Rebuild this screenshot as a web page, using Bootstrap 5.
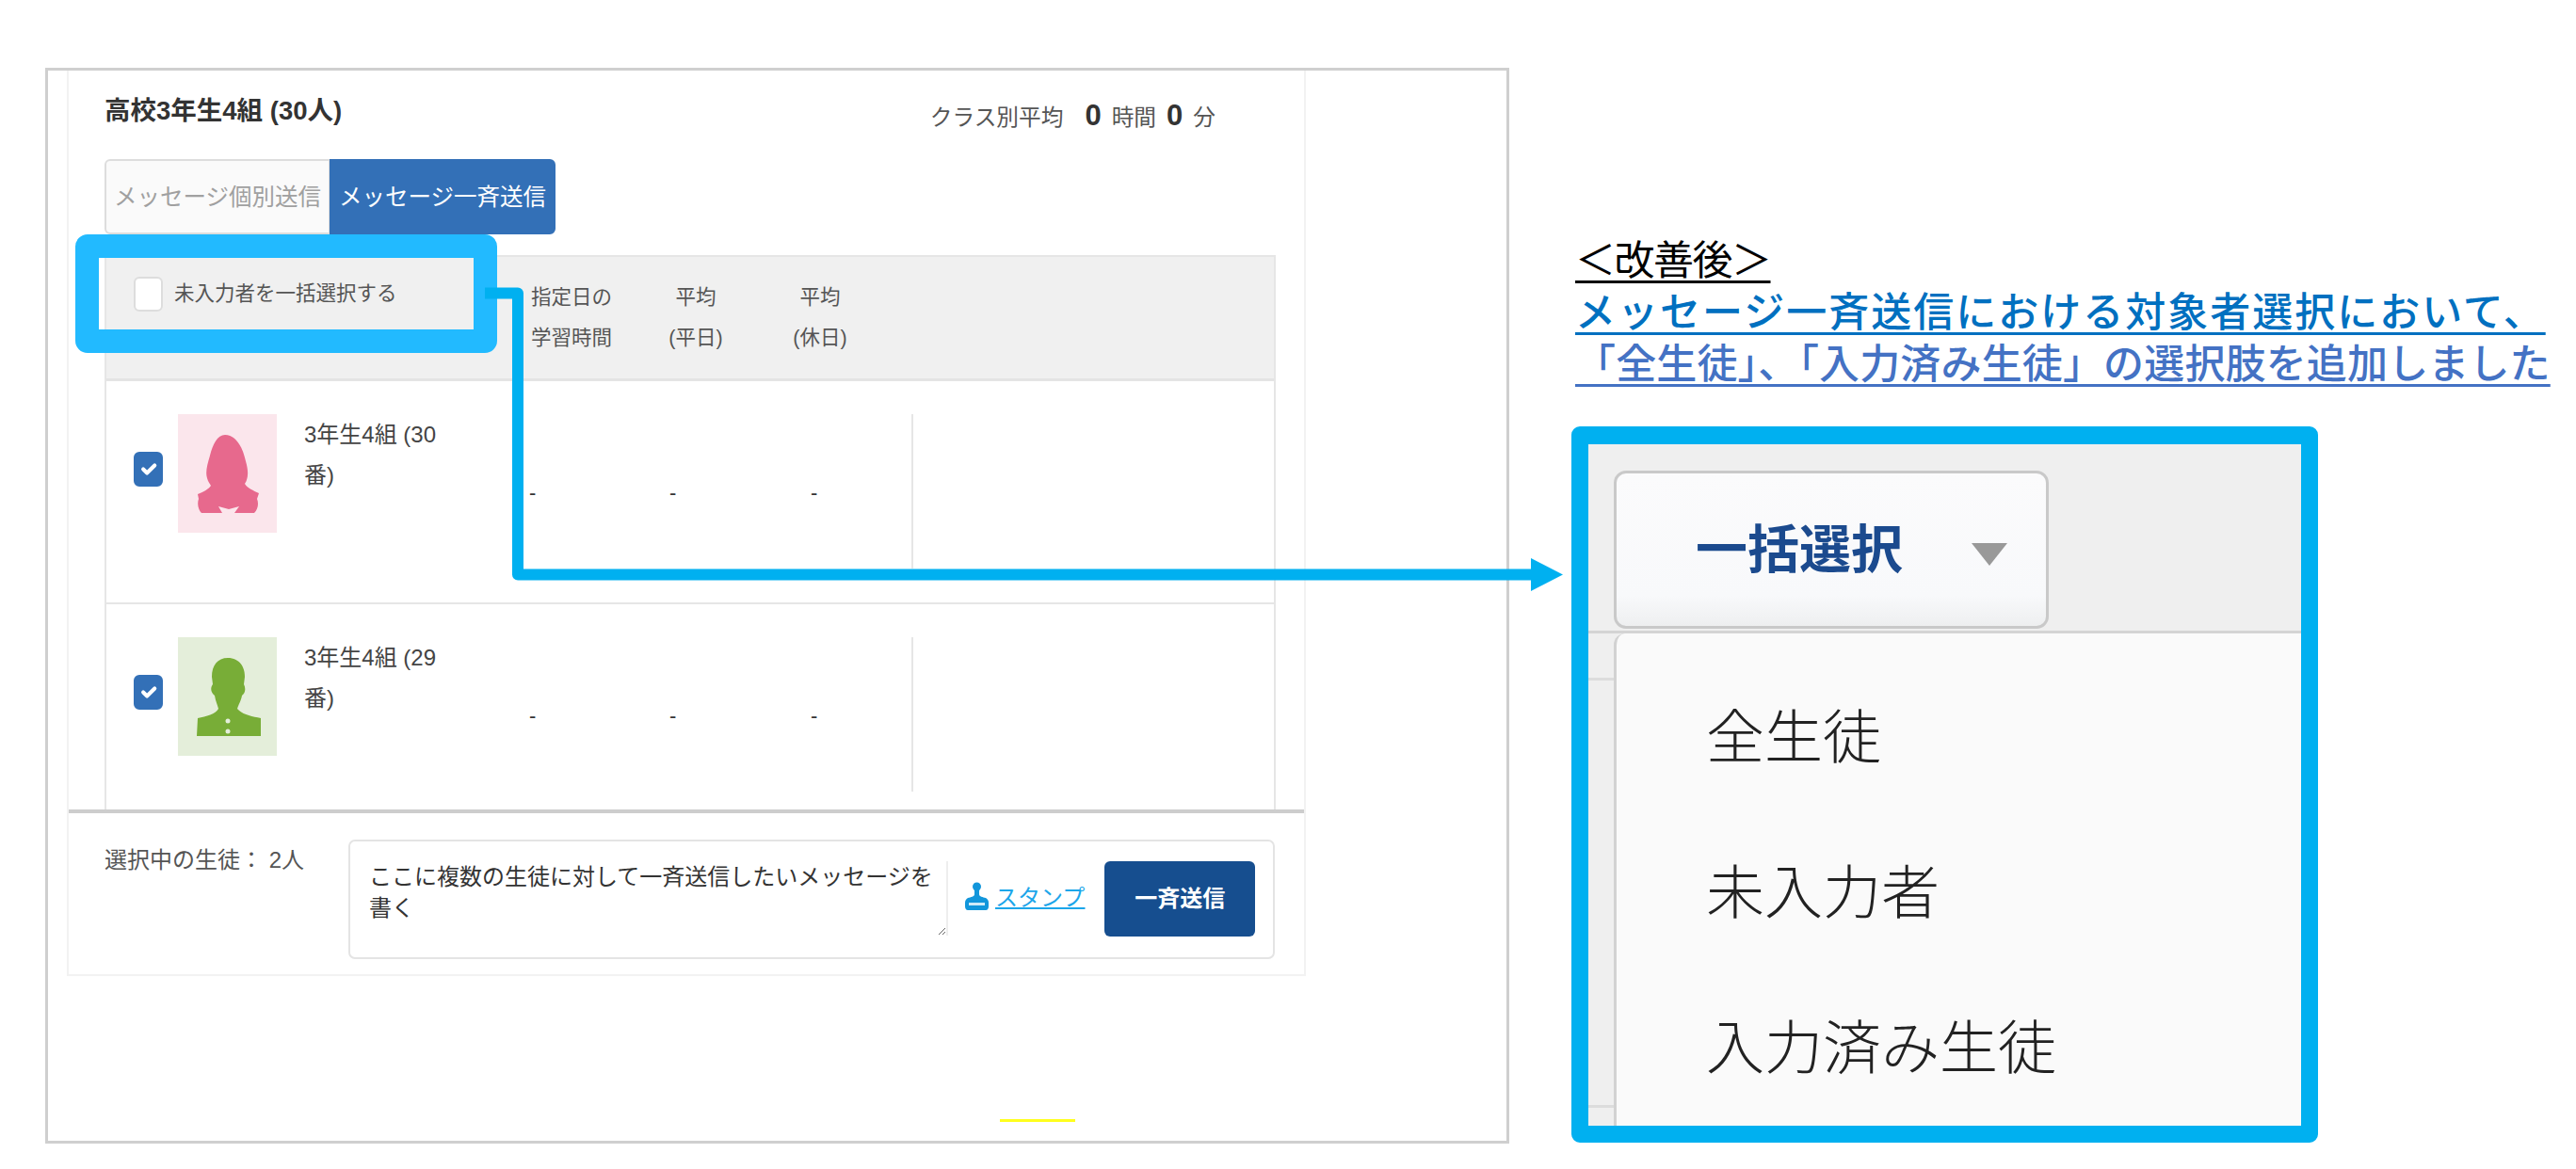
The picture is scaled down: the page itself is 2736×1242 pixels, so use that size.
<!DOCTYPE html>
<html lang="ja">
<head>
  <meta charset="UTF-8">
  <title>メッセージ一斉送信</title>
  <link rel="stylesheet" href="https://cdn.jsdelivr.net/npm/bootstrap@5.3.0/dist/css/bootstrap.min.css">
  <style>
    body {
      font-family: "Liberation Sans", "Noto Sans CJK JP", sans-serif;
      background: #fff;
      color: #444;
      margin: 0;
    }

    .slide {
      position: relative;
      width: 2736px;
      height: 1242px;
      padding: 72px 0 0 48px;
      overflow: hidden;
    }

    /* left side: screenshot of the teacher screen */
    .shot-frame {
      width: 1555px;
      height: 1143px;
      border: 3px solid #cfcfcf;
      padding-left: 20px;
      flex: none;
    }

    .shot-panel {
      width: 1316px;
      height: 962px;
      border-left: 2px solid #f2f2f2;
      border-right: 2px solid #f2f2f2;
      border-bottom: 2px solid #f2f2f2;
    }

    .shot-top {
      padding: 23px 31px 0 38px;
    }

    .class-title {
      height: 71px;
      font-size: 27.5px;
      line-height: 40px;
      font-weight: 700;
      color: #333;
    }

    .class-avg {
      font-size: 23.7px;
      font-weight: 400;
      color: #555;
      margin: 5px 63px 0 0;
    }

    .class-avg b {
      font-size: 31px;
      color: #333;
      margin: 0 11px;
    }

    .class-avg b:first-child {
      margin-left: 23px;
    }

    .tab-btn {
      width: 240px;
      height: 80px;
      padding: 0;
      font-size: 24.5px;
      line-height: 78px;
      white-space: nowrap;
    }

    .tab-off {
      background: #fafafa;
      border: 2px solid #ddd;
      color: #a0a0a0;
    }

    .tab-on {
      background: #3370b7;
      border: 2px solid #3370b7;
      color: #fff;
    }

    .tab-off:hover { background: #fafafa; border-color: #ddd; color: #a0a0a0; }
    .tab-on:hover { background: #3370b7; border-color: #3370b7; color: #fff; }

    .list-wrap {
      width: 1244px;
      height: 589px;
      margin-top: 22px;
      border-left: 2px solid #e6e6e6;
      border-right: 2px solid #e6e6e6;
      overflow: hidden;
    }

    .list-head {
      height: 134px;
      background: #f0f0f0;
      border-top: 2px solid #e6e6e6;
      border-bottom: 3px solid #e4e4e4;
      padding-top: 22px;
      font-size: 21.5px;
      line-height: 43px;
      color: #555;
    }

    .head-check {
      width: 428px;
      padding-left: 29px;
      height: 37px;
      gap: 12px;
      margin-top: -1px;
    }

    .head-col {
      width: 132px;
      text-align: center;
    }

    .mini-check.form-check-input {
      width: 31px;
      height: 37px;
      margin: 0;
      border: 2px solid #ddd;
      border-radius: 6px;
      flex: none;
    }

    .mini-check.form-check-input:checked {
      background-color: #3370b7;
      border-color: #3370b7;
      background-size: 100% 100%;
    }

    .stu-row {
      height: 237px;
      padding: 35px 0 0 29px;
      border-bottom: 2px solid #e6e6e6;
    }

    .stu-row .mini-check {
      margin-top: 40px;
    }

    .stu-face {
      width: 105px;
      height: 126px;
      margin-left: 16px;
      flex: none;
    }

    .stu-name {
      box-sizing: content-box;
      width: 152px;
      padding: 0 87px 0 29px;
      flex: none;
      font-size: 24px;
      line-height: 43px;
    }

    .stu-val {
      flex: none;
      margin-top: 64px;
      font-size: 22px;
      line-height: 40px;
      color: #333;
    }

    .stu-rule {
      width: 2px;
      height: 164px;
      background: #e6e6e6;
    }

    .send-bar {
      height: 173px;
      border-top: 4px solid #cdcdcd;
      padding: 28px 31px 0 38px;
    }

    .send-count {
      width: 259px;
      font-size: 24px;
      line-height: 44px;
      color: #555;
      flex: none;
    }

    .send-box {
      width: 985px;
      height: 127px;
      border: 2px solid #e4e4e4;
      border-radius: 7px;
      padding: 21px 19px 0 20px;
    }

    .send-text.form-control {
      width: 615px;
      height: 79px;
      padding: 0;
      border: 0;
      border-right: 2px solid #eee;
      border-radius: 0;
      font-size: 24px;
      line-height: 33px;
      color: #333;
      flex: none;
      box-shadow: none;
      overflow: hidden;
    }

    .stamp-link {
      margin: 22px 0 0 18px;
      color: #1ca6ea;
      font-size: 24px;
      line-height: 34px;
      flex: none;
    }

    .stamp-link svg {
      vertical-align: -5px;
      margin-right: 7px;
    }

    .stamp-link span {
      text-decoration: underline;
    }

    .send-btn {
      width: 161px;
      height: 80px;
      margin-left: 21px;
      padding: 0;
      background: #164e8f;
      border: 0;
      border-radius: 6px;
      color: #fff;
      font-size: 24px;
      font-weight: 700;
    }

    .send-btn:hover { background: #164e8f; color: #fff; }

    /* right side: caption and enlarged dropdown */
    .after-col {
      width: 1060px;
      margin-left: 66px;
      padding-top: 178px;
      flex: none;
    }

    .after-cap {
      font-size: 43px;
      line-height: 55px;
      white-space: nowrap;
      margin-bottom: 38px;
      padding-left: 4px;
    }

    .after-cap span {
      text-decoration: underline;
      text-decoration-thickness: 3px;
      text-underline-offset: 6px;
    }

    .cap-a { color: #000; letter-spacing: -1.5px; }
    .cap-b { color: #0070c0; font-weight: 500; letter-spacing: 2px; }
    .cap-c { color: #4472c4; font-weight: 500; letter-spacing: .15px; }

    .zoom-box {
      width: 793px;
      height: 761px;
      border: 18px solid #00b0f0;
      border-top-width: 19px;
      border-radius: 9px;
      background: #efefef;
      overflow: hidden;
    }

    .zoom-head {
      height: 201px;
      padding: 28px 0 0 27px;
      border-bottom: 3px solid #d4d4d4;
    }

    .pick-btn.dropdown-toggle {
      width: 462px;
      height: 168px;
      padding: 0 0 0 84px;
      background: linear-gradient(#fbfbfc, #f8f9fb 80%, #eeeff0);
      border: 3px solid #c9c9c9;
      border-radius: 13px;
      color: #1b4a8e;
      font-size: 55px;
      font-weight: 700;
    }

    .pick-btn.dropdown-toggle::after {
      border-top: 24px solid #999;
      border-left: 19px solid transparent;
      border-right: 19px solid transparent;
      border-bottom: 0;
      margin-left: 73px;
      vertical-align: 2px;
    }

    .zoom-strip {
      width: 27px;
      flex: none;
    }

    .strip-line {
      height: 3px;
      background: #dcdcdc;
      margin-top: 47px;
    }

    .strip-line + .strip-line {
      margin-top: 451px;
    }

    .pick-menu.list-group {
      flex: 1;
      height: 541px;
      padding-top: 29px;
      background: #fafafa;
      border-left: 3px solid #d2d2d2;
      border-radius: 12px 0 0 0;
    }

    .pick-menu .list-group-item {
      height: 165px;
      padding: 0 0 0 95px;
      border: 0;
      background: transparent;
      font-size: 62px;
      font-weight: 300;
      line-height: 165px;
      color: #222;
    }

    /* things drawn over the slide */
    .callout {
      position: absolute;
      left: 80px;
      top: 249px;
      width: 448px;
      height: 126px;
      border: 25px solid #22baff;
      border-radius: 13px;
    }

    .flow-line {
      position: absolute;
      left: 0;
      top: 0;
    }

    .yellow-mark {
      position: absolute;
      left: 1062px;
      top: 1189px;
      width: 80px;
      height: 3px;
      background: #ffff1e;
    }
  </style>
</head>
<body>
<div class="slide d-flex align-items-start">

  <div class="shot-frame">
    <div class="shot-panel">
      <div class="shot-top">
        <div class="class-title d-flex justify-content-between">
          <span>高校3年生4組 (30人)</span>
          <span class="class-avg">クラス別平均<b>0</b>時間<b>0</b>分</span>
        </div>
        <div class="btn-group">
          <button type="button" class="btn tab-btn tab-off">メッセージ個別送信</button>
          <button type="button" class="btn tab-btn tab-on">メッセージ一斉送信</button>
        </div>

        <div class="list-wrap">
          <div class="list-head d-flex">
            <div class="head-check d-flex align-items-center">
              <input class="form-check-input mini-check" type="checkbox">
              <span>未入力者を一括選択する</span>
            </div>
            <div class="head-col">指定日の<br>学習時間</div>
            <div class="head-col">平均<br>(平日)</div>
            <div class="head-col">平均<br>(休日)</div>
          </div>

          <div class="stu-row d-flex">
            <input class="form-check-input mini-check" type="checkbox" checked>
            <svg class="stu-face" viewBox="0 0 105 126">
              <rect width="105" height="126" fill="#fbe6ec"/>
              <path fill="#e7698d" d="M50 22C42 22 37 32 34 44C31 54 29 62 31 68C32 72 34 74 35 76C32 80 28 82 21 85L22 90C20 96 22 102 25 105L47 105L43 98L54 101L65 98L60 105L81 105C85 101 86 95 84 90L86 84C80 81 74 79 71 74C75 68 75 60 72 50C69 36 62 22 50 22Z"/>
            </svg>
            <div class="stu-name">3年生4組 (30番)</div>
            <div class="stu-val" style="width: 149px">-</div>
            <div class="stu-val" style="width: 150px">-</div>
            <div class="stu-val" style="width: 107px">-</div>
            <div class="stu-rule"></div>
          </div>

          <div class="stu-row d-flex">
            <input class="form-check-input mini-check" type="checkbox" checked>
            <svg class="stu-face" viewBox="0 0 105 126">
              <rect width="105" height="126" fill="#e4eeda"/>
              <path fill="#78ad37" d="M53 22C42 22 36 30 36 42L37 50C34 54 35 59 39 62C40 68 42 72 43 76C40 82 30 84 21 86L20 105L88 105L88 86C78 84 68 82 63 76C64 72 67 68 68 62C72 59 72 54 70 50L71 42C71 30 64 22 53 22Z"/>
              <circle cx="53" cy="89" r="2.5" fill="#e4eeda"/>
              <circle cx="53" cy="100" r="2.5" fill="#e4eeda"/>
            </svg>
            <div class="stu-name">3年生4組 (29番)</div>
            <div class="stu-val" style="width: 149px">-</div>
            <div class="stu-val" style="width: 150px">-</div>
            <div class="stu-val" style="width: 107px">-</div>
            <div class="stu-rule"></div>
          </div>
        </div>
      </div>

      <div class="send-bar d-flex">
        <div class="send-count">選択中の生徒： 2人</div>
        <div class="send-box d-flex align-items-start">
          <textarea class="form-control send-text">ここに複数の生徒に対して一斉送信したいメッセージを書く</textarea>
          <a class="stamp-link" href="#">
            <svg width="25" height="30" viewBox="0 0 25 30">
              <circle cx="12.5" cy="5" r="4.5" fill="#1296db"/>
              <path fill="#1296db" d="M10 8H15V13C15 16 19 16 22 17C24 18 25 20 25 22V26C25 28 24 30 22 30H3C1 30 0 28 0 26V22C0 20 1 18 3 17C6 16 10 16 10 13Z"/>
              <rect x="4" y="22" width="17" height="3" fill="#fff" opacity=".8"/>
            </svg><span>スタンプ</span>
          </a>
          <button type="button" class="btn send-btn">一斉送信</button>
        </div>
      </div>
    </div>
  </div>

  <div class="after-col">
    <div class="after-cap">
      <div><span class="cap-a">＜改善後＞</span></div>
      <div><span class="cap-b">メッセージ一斉送信における対象者選択において、</span></div>
      <div><span class="cap-c">「全生徒」、「入力済み生徒」の選択肢を追加しました</span></div>
    </div>
    <div class="zoom-box">
      <div class="zoom-head">
        <button type="button" class="btn pick-btn dropdown-toggle d-block text-start">一括選択</button>
      </div>
      <div class="d-flex">
        <div class="zoom-strip">
          <div class="strip-line"></div>
          <div class="strip-line"></div>
        </div>
        <ul class="list-group pick-menu">
          <li class="list-group-item">全生徒</li>
          <li class="list-group-item">未入力者</li>
          <li class="list-group-item">入力済み生徒</li>
        </ul>
      </div>
    </div>
  </div>

  <div class="callout"></div>
  <svg class="flow-line" width="2736" height="1242" viewBox="0 0 2736 1242">
    <path d="M515 311.500H550V610.500H1630" fill="none" stroke="#00b0f0" stroke-width="12" stroke-linejoin="round"/>
    <path d="M1626 593L1660 610.500L1626 628Z" fill="#00b0f0"/>
  </svg>
  <div class="yellow-mark"></div>
</div>

<script src="https://cdn.jsdelivr.net/npm/bootstrap@5.3.0/dist/js/bootstrap.bundle.min.js"></script>
</body>
</html>
